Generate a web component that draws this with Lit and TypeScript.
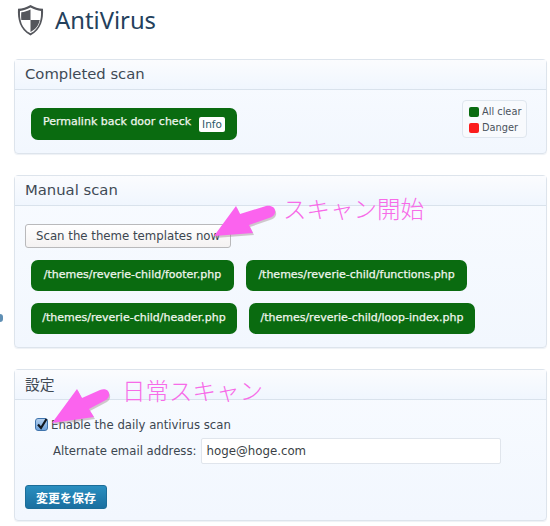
import { LitElement, html, css } from "lit";
import { customElement } from "lit/decorators.js";

const arrow = (x: number, y: number, w: number, h: number, d: string) => html`
  <svg class="arrow" style="left:${x}px;top:${y}px;width:${w}px;height:${h}px" viewBox="0 0 ${w} ${h}">
    <path d=${d} fill="#a08a90" opacity="0.45" transform="translate(1 2)"></path>
    <path d=${d} fill="#fb63ee"></path>
  </svg>`;

@customElement("app-root")
export class AppRoot extends LitElement {
  static styles = css`
    :host {
      display: block;
      position: relative;
      width: 550px;
      height: 526px;
      overflow: hidden;
      background: #fff;
      font-family: "DejaVu Sans", "Noto Sans CJK JP", sans-serif;
      color: #3c4650;
      box-sizing: border-box;
      padding: 0 3px 0 14px;
    }
    * { box-sizing: border-box; }
    .head {
      display: flex;
      align-items: center;
      height: 59px;
      padding: 0 0 19px 3px;
      gap: 11px;
    }
    .head svg { width: 27px; height: 32px; display: block; }
    .head h1 {
      margin: 0;
      font-family: "Noto Sans", "Open Sans", sans-serif;
      font-size: 23.8px;
      line-height: 30px;
      font-weight: 400;
      color: #24415c;
    }
    .panel {
      border: 1px solid #dde4ec;
      border-radius: 4px;
      background: linear-gradient(#f8fbff, #f2f7fe);
      margin-bottom: 21px;
      box-shadow: 0 1px 1px #eef1f5;
    }
    .title {
      height: 30px;
      border-bottom: 1px solid #d9e2ec;
      padding: 0 10px 3px;
      display: flex;
      align-items: center;
      font-size: 14.8px;
      color: #3f4a55;
      background: linear-gradient(#fbfcfe, #f0f6fe);
    }
    .b1 {
      height: 63px;
      padding: 18px 19px 0 16px;
      display: flex;
      justify-content: space-between;
      align-items: flex-start;
    }
    .pill {
      display: inline-flex;
      align-items: center;
      background: #0a6b10;
      color: #f0f6ee;
      border-radius: 7px;
      font-size: 11px;
      font-weight: 400;
      -webkit-text-stroke: 0.25px #f0f6ee;
      padding: 0 12px;
      white-space: nowrap;
    }
    .b1 .pill { height: 32px; width: 206px; padding-bottom: 5px; }
    .info {
      background: #fff;
      color: #2c5a6a;
      -webkit-text-stroke: 0;
      border-radius: 2px;
      font-size: 10.5px;
      height: 15px;
      line-height: 14px;
      padding: 0 3px;
      margin-left: 8px;
      margin-top: 5px;
    }
    .legend {
      margin-top: -8px;
      width: 65px;
      height: 38px;
      border: 1px solid #dfe6ee;
      border-radius: 4px;
      background: #f8fafd;
      padding: 3px 0 0 6px;
      font-size: 9.8px;
      line-height: 16px;
      color: #4a525c;
    }
    .legend div { display: flex; align-items: center; gap: 3px; height: 16px; }
    .sw { width: 10px; height: 10px; border-radius: 2px; display: block; }
    .b2 { height: 141px; padding: 18px 0 0 10px; }
    .scan {
      width: 206px;
      height: 24px;
      border: 1px solid #b9b9bb;
      border-radius: 3px;
      background: linear-gradient(#fff, #f4f2f2);
      font: inherit;
      font-size: 11.75px;
      color: #3c4650;
      padding: 0 0 0 10px;
      text-align: left;
      display: block;
      margin-bottom: 12px;
      white-space: nowrap;
    }
    .rows {
      display: flex;
      flex-direction: column;
      gap: 12px;
      padding-left: 6px;
    }
    .row { display: flex; gap: 12px; }
    .row .pill { height: 31px; justify-content: center; padding: 0 0 3px; }
    .b3 { height: 120px; padding: 17px 0 0 10px; font-size: 11.7px; }
    .check { display: flex; align-items: center; height: 15px; padding-left: 10px; gap: 3px; }
    .box {
      width: 13px; height: 13px;
      background: linear-gradient(#b4d0ee, #6fa2da);
      border: 1px solid #3f74ad;
      border-radius: 3px;
      display: block;
    }
    .box svg { width: 100%; height: 100%; display: block; overflow: visible; }
    .mail { display: flex; align-items: center; gap: 5px; margin-top: 6px; padding-left: 28px; }
    .input {
      width: 300px; height: 26px;
      background: #fff;
      border: 1px solid #e0e5ec;
      border-radius: 2px;
      padding: 0 4px;
      display: flex; align-items: center;
      font-size: 11.8px;
      color: #3a3f45;
    }
    .save {
      margin-top: 21px;
      width: 82px; height: 24px;
      border: 1px solid #1c6d98;
      border-radius: 3px;
      background: linear-gradient(#2a8fc0, #1a6fa0);
      color: #fff;
      font-family: "Noto Sans CJK JP", sans-serif;
      font-size: 12px;
      font-weight: 700;
      padding: 0;
      display: block;
    }
    .arrow { position: absolute; overflow: visible; }
    .note {
      position: absolute;
      font-family: "Noto Sans CJK JP", sans-serif;
      color: #f76be8;
      font-size: 23.5px;
      line-height: 30px;
      font-weight: 300;
      white-space: nowrap;
    }
    .dot {
      position: absolute;
      left: -3px; top: 314px;
      width: 6px; height: 8px;
      border-radius: 3px;
      background: #5f8fb4;
    }
  `;

  render() {
    return html`
      <div class="head">
        <svg viewBox="0 0 27 32">
          <path d="M13.5 1 C17.5 3.5 21.5 4.6 26 4.8 C26.6 15 24.5 25.5 13.5 31.5 C2.5 25.5 .4 15 1 4.8 C5.5 4.6 9.5 3.5 13.5 1Z" fill="#54565c"></path>
          <path d="M13.5 3.6 C17 5.6 20.5 6.6 24 6.9 C24.4 15.5 22.6 24.5 13.5 29.3 C4.4 24.5 2.6 15.5 3 6.9 C6.5 6.6 10 5.6 13.5 3.6Z" fill="#fff"></path>
          <path d="M13.5 5.4 V16 H4.3 C4.1 13 4.1 10.6 4.3 8.2 C7.5 7.8 10.5 7 13.5 5.4Z M13.5 16 H22.7 C21.8 21 19.2 25 13.5 28 Z" fill="#54565c"></path>
        </svg>
        <h1>AntiVirus</h1>
      </div>

      <section class="panel">
        <div class="title">Completed scan</div>
        <div class="b1">
          <span class="pill">Permalink back door check <span class="info">Info</span></span>
          <div class="legend">
            <div><i class="sw" style="background:#0a6b10"></i>All clear</div>
            <div><i class="sw" style="background:#fb1c1c"></i>Danger</div>
          </div>
        </div>
      </section>

      <section class="panel">
        <div class="title">Manual scan</div>
        <div class="b2">
          <button class="scan">Scan the theme templates now</button>
          <div class="rows">
            <div class="row">
              <span class="pill" style="width:203px">/themes/reverie-child/footer.php</span>
              <span class="pill" style="width:221px">/themes/reverie-child/functions.php</span>
            </div>
            <div class="row">
              <span class="pill" style="width:206px">/themes/reverie-child/header.php</span>
              <span class="pill" style="width:226px">/themes/reverie-child/loop-index.php</span>
            </div>
          </div>
        </div>
      </section>

      <section class="panel">
        <div class="title">設定</div>
        <div class="b3">
          <div class="check">
            <span class="box">
              <svg viewBox="0 0 11 11"><path d="M2 5.5 L5 9 L10.5 0" fill="none" stroke="#10171f" stroke-width="2.2"></path></svg>
            </span>
            Enable the daily antivirus scan
          </div>
          <div class="mail">
            <span>Alternate email address:</span>
            <span class="input">hoge@hoge.com</span>
          </div>
          <button class="save">変更を保存</button>
        </div>
      </section>

      ${arrow(214, 205, 62, 35, "M0 31 L22 1 L26 9 L52 1 C58 0 62 3 61 8 C60 11 58 12 55 13 L35 20 L39 28 Z")}
      ${arrow(50, 388, 60, 36, "M2 35 L27 1 L32 10 L50 2 C56 0 60 3 59 8 C58 11 56 12 54 13 L39 21 L44 29 Z")}
      <span class="note" style="left:283px;top:193px">スキャン開始</span>
      <span class="note" style="left:122px;top:375px">日常スキャン</span>
      <span class="dot"></span>
    `;
  }
}
